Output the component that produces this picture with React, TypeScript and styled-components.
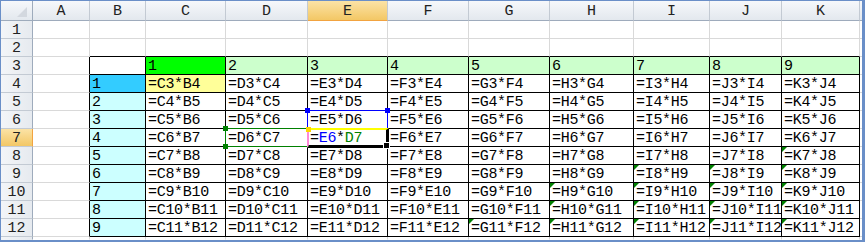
import React from 'react';
import styled, { createGlobalStyle, css } from 'styled-components';

const GlobalStyle = createGlobalStyle`
  html, body {
    margin: 0;
    padding: 0;
    background: #fff;
  }
`;

// column letters and pixel widths (border included)
const COLS = ['A', 'B', 'C', 'D', 'E', 'F', 'G', 'H', 'I', 'J', 'K'];
const WIDTHS = [57, 56, 80, 82, 80, 81, 81, 84, 76, 72, 78];
const ROWS = [1, 2, 3, 4, 5, 6, 7, 8, 9, 10, 11, 12];

const FLAGGED = new Set([
  'K8', 'I9', 'J9', 'K9', 'H10', 'I10', 'J10', 'K10',
  'H11', 'I11', 'J11', 'K11', 'G12', 'H12', 'I12', 'J12', 'K12',
]);

const GRID = '#d9d9d9';
const INK = '#000';
const FONT = `"Liberation Mono", "DejaVu Sans Mono", monospace`;

const Frame = styled.div`
  width: 865px;
  height: 242px;
  box-sizing: border-box;
  border-left: 1px solid #6a8fc8;
  border-top: 1px solid #6a8fc8;
  border-right: 3px solid #6a8fc8;
  border-bottom: 2px solid #6a8fc8;
  background: #f4f6f9;
  overflow: hidden;
`;

const Sheet = styled.div`
  position: relative;
  display: grid;
  grid-template-columns: 32px ${WIDTHS.map((w) => `${w}px`).join(' ')} 1fr;
  grid-template-rows: 20px repeat(12, 18px) 1fr;
  height: 100%;
  font-family: ${FONT};
  font-size: 15px;
  color: ${INK};
`;

const headerBase = css`
  box-sizing: border-box;
  display: flex;
  align-items: center;
  justify-content: center;
  color: #222;
  font-size: 15px;
  overflow: hidden;
`;

const Corner = styled.div`
  ${headerBase};
  position: relative;
  background: linear-gradient(#f6f8fb, #e3e8ee);
  border-right: 1px solid #9eabbc;
  border-bottom: 1px solid #9eabbc;

  &::after {
    content: '';
    position: absolute;
    right: 5px;
    bottom: 3px;
    width: 0;
    height: 0;
    border-left: 10px solid transparent;
    border-bottom: 10px solid #d3d8df;
  }
`;

const ColHeader = styled.div<{ $selected?: boolean; $last?: boolean }>`
  ${headerBase};
  padding-top: 1px;
  background: ${({ $selected }) =>
    $selected ? 'linear-gradient(#fbe3a6, #f3c765)' : 'linear-gradient(#f6f8fb, #e3e8ee)'};
  border-right: 1px solid ${({ $last }) => ($last ? 'transparent' : '#c3cad3')};
  border-bottom: 1px solid ${({ $selected }) => ($selected ? '#f2a340' : '#9eabbc')};
`;

const RowHeader = styled.div<{ $selected?: boolean; $last?: boolean }>`
  ${headerBase};
  padding-top: 2px;
  background: ${({ $selected }) =>
    $selected ? 'linear-gradient(#fbe3a6, #f3c765)' : 'linear-gradient(90deg, #f3f5f8, #e6eaef)'};
  border-right: 1px solid ${({ $selected }) => ($selected ? '#f2a340' : '#9eabbc')};
  border-bottom: 1px solid ${({ $last }) => ($last ? 'transparent' : '#c3cad3')};
`;

const Cell = styled.div<{ $bg: string; $rb: string; $bb: string; $flag?: boolean }>`
  position: relative;
  box-sizing: border-box;
  display: flex;
  align-items: flex-end;
  padding: 0 0 0 2px;
  line-height: 15px;
  letter-spacing: -0.3px;
  white-space: nowrap;
  overflow: hidden;
  background: ${({ $bg }) => $bg};
  border-right: 1px solid ${({ $rb }) => $rb};
  border-bottom: 1px solid ${({ $bb }) => $bb};

  ${({ $flag }) =>
    $flag &&
    css`
      &::before {
        content: '';
        position: absolute;
        left: 0;
        top: 0;
        width: 0;
        height: 0;
        border-top: 5px solid #008000;
        border-right: 5px solid transparent;
      }
    `}
`;

const Ref = styled.span<{ $color: string }>`
  color: ${({ $color }) => $color};
`;

// formula-edit overlays: the two referenced ranges and the cell being edited
const handle = css`
  content: '';
  position: absolute;
  width: 5px;
  height: 5px;
`;

const GreenRef = styled.div`
  position: absolute;
  box-sizing: border-box;
  border: 1px solid #008000;

  &::before {
    ${handle};
    left: -3px;
    top: -3px;
    background: #008000;
  }
  &::after {
    ${handle};
    left: -3px;
    bottom: -3px;
    background: #008000;
  }
`;

const BlueRef = styled.div`
  position: absolute;
  box-sizing: border-box;
  border: 1px solid #0000ff;

  &::before {
    ${handle};
    left: -3px;
    top: -3px;
    background: #0000ff;
  }
  &::after {
    ${handle};
    right: -3px;
    top: -3px;
    background: #0000ff;
  }
`;

const ActiveCell = styled.div`
  position: absolute;
  box-sizing: border-box;
  border-style: solid double double solid;
  border-color: #ffff00 #000 #000 #ff88d8;
  border-width: 2px 3px 3px 2px;

  &::before {
    ${handle};
    left: -3px;
    top: -3px;
    background: #ffd800;
  }
  &::after {
    ${handle};
    right: -4px;
    bottom: -4px;
    background: #000;
    border: 1px solid #fff;
  }
`;

function cellInfo(r: number, ci: number) {
  let text: React.ReactNode = '';
  let bg = '#fff';
  if (r === 3 && ci >= 2) {
    text = String(ci - 1);
    bg = ci === 2 ? '#00ff00' : '#ccffcc';
  } else if (r >= 4 && ci === 1) {
    text = String(r - 3);
    bg = r === 4 ? '#33ccff' : '#ccffff';
  } else if (r >= 4 && ci >= 2) {
    const a = `${COLS[ci]}${r - 1}`;
    const b = `${COLS[ci - 1]}${r}`;
    if (r === 7 && ci === 4) {
      text = (
        <>
          =<Ref $color="#0000ff">{a}</Ref>*<Ref $color="#008000">{b}</Ref>
        </>
      );
    } else {
      text = `=${a}*${b}`;
    }
    if (r === 4 && ci === 2) bg = '#ffff99';
  }
  const rb = r >= 3 ? INK : GRID;
  const bb = ci >= 1 && r >= 2 ? INK : GRID;
  return { text, bg, rb, bb };
}

// pixel edges of grid columns / rows inside the sheet
const colLeft = (ci: number) => 32 + WIDTHS.slice(0, ci).reduce((s, w) => s + w, 0);
const rowTop = (r: number) => 20 + (r - 1) * 18;

export default function App() {
  const dL = colLeft(3) - 1;
  const eL = colLeft(4) - 1;
  const eW = WIDTHS[4] + 1;

  return (
    <>
      <GlobalStyle />
      <Frame>
        <Sheet>
          <Corner />
          {COLS.map((c) => (
            <ColHeader key={c} $selected={c === 'E'}>
              {c}
            </ColHeader>
          ))}
          <ColHeader $last />

          {ROWS.map((r) => (
            <React.Fragment key={r}>
              <RowHeader $selected={r === 7}>{r}</RowHeader>
              {COLS.map((c, ci) => {
                const info = cellInfo(r, ci);
                return (
                  <Cell
                    key={c}
                    $bg={info.bg}
                    $rb={info.rb}
                    $bb={info.bb}
                    $flag={FLAGGED.has(`${c}${r}`)}
                  >
                    {info.text}
                  </Cell>
                );
              })}
              <Cell $bg="#fff" $rb="transparent" $bb={GRID} />
            </React.Fragment>
          ))}

          <RowHeader $last />
          {COLS.map((c) => (
            <Cell key={c} $bg="#fff" $rb={GRID} $bb="transparent" />
          ))}
          <Cell $bg="#fff" $rb="transparent" $bb="transparent" />

          <GreenRef style={{ left: dL, top: rowTop(7) - 1, width: WIDTHS[3] + 2, height: 19 }} />
          <BlueRef style={{ left: eL, top: rowTop(6) - 1, width: eW, height: 19 }} />
          <ActiveCell style={{ left: eL, top: rowTop(7) - 1, width: eW + 1, height: 20 }} />
        </Sheet>
      </Frame>
    </>
  );
}
